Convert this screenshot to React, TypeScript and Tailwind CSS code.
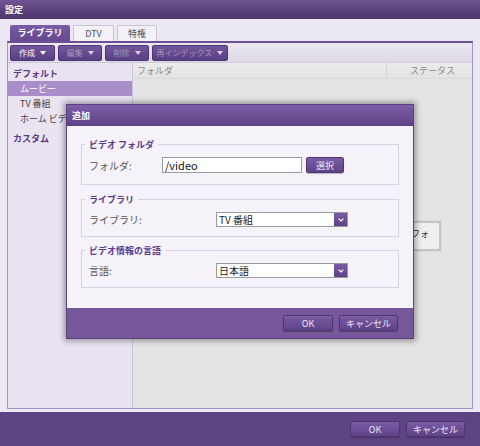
import type { ReactNode } from "react";

const font = "font-['Noto_Sans_CJK_JP','Noto_Sans',sans-serif]";

function Caret({ dim }: { dim?: boolean }) {
  return (
    <svg width="6" height="4" viewBox="0 0 6 4" aria-hidden="true">
      <path d="M0 0H6L3 4Z" fill={dim ? "#d8d0e4" : "#ffffff"} />
    </svg>
  );
}

function ToolButton({
  label,
  width,
  dim,
}: {
  label: string;
  width: string;
  dim?: boolean;
}) {
  return (
    <div
      className={`${width} h-[16px] flex items-center justify-center gap-[5px] whitespace-nowrap rounded-[2px] border border-[#4d3672] bg-gradient-to-b from-[#73569c] to-[#5a3f84] text-[8px] leading-none ${
        dim ? "text-[#a596bd]" : "text-white"
      }`}
    >
      <span>{label}</span>
      <Caret dim={dim} />
    </div>
  );
}

function PurpleButton({ label, width }: { label: string; width: string }) {
  return (
    <div
      className={`${width} h-[16px] flex items-center justify-center whitespace-nowrap rounded-[2px] border border-[#4f3675] bg-gradient-to-b from-[#7a5ba4] to-[#5f4388] text-[9px] leading-none text-[#ece6f4] shadow-[0_1px_1px_rgba(0,0,0,0.25)]`}
    >
      {label}
    </div>
  );
}

function Group({
  legend,
  height,
  children,
}: {
  legend: string;
  height: string;
  children: ReactNode;
}) {
  return (
    <div className={`relative mx-[14px] ${height} border border-[#d6d3de]`}>
      <span className="absolute -top-[7px] left-[3px] bg-[#f5f3f9] px-[4px] text-[9px] leading-[13px] font-bold text-[#5b3c8c]">
        {legend}
      </span>
      {children}
    </div>
  );
}

function Select({ value }: { value: string }) {
  return (
    <div className="flex h-[15px] w-[132px] border border-[#9b9b9b] bg-white">
      <span className="flex-1 pl-[2px] text-[10px] leading-[13px] text-[#1a1a1a]">
        {value}
      </span>
      <div className="flex w-[13px] items-center justify-center bg-gradient-to-b from-[#7a5aa4] to-[#5d4287]">
        <svg width="6" height="4" viewBox="0 0 6 4" aria-hidden="true">
          <path
            d="M0.6 0.6L3 3L5.4 0.6"
            stroke="#ffffff"
            strokeWidth="1.1"
            fill="none"
          />
        </svg>
      </div>
    </div>
  );
}

export default function App() {
  return (
    <div
      className={`relative flex h-[446px] w-[480px] flex-col overflow-hidden bg-[#ece8f3] ${font}`}
    >
      {/* window title */}
      <div className="flex h-[19px] items-center bg-gradient-to-b from-[#6f5693] to-[#4b3569] pl-[5px] text-[9px] font-bold text-white">
        設定
      </div>

      <div className="flex h-[390px] flex-col px-[7px] pt-[6px]">
        {/* tabs */}
        <div className="ml-[3px] flex h-[16px] gap-[3px]">
          <div className="flex w-[60px] items-center justify-center rounded-t-[2px] bg-gradient-to-b from-[#7a5ba5] to-[#65488f] text-[9px] font-bold text-white">
            ライブラリ
          </div>
          <div className="flex w-[41px] items-center justify-center rounded-t-[2px] border border-b-0 border-[#c9c3d4] bg-[#f3f1f6] text-[9px] text-[#555]">
            DTV
          </div>
          <div className="flex w-[40px] items-center justify-center rounded-t-[2px] border border-b-0 border-[#c9c3d4] bg-[#f3f1f6] text-[9px] text-[#555]">
            特権
          </div>
        </div>

        {/* tab panel */}
        <div className="flex flex-1 flex-col border border-t-2 border-[#a690c6] border-t-[#6c4f96]">
          <div className="flex h-[20px] items-center gap-[3px] border-b border-[#d2cbdc] bg-gradient-to-b from-[#ebe8f0] to-[#ddd8e5] pl-[2px]">
            <ToolButton label="作成" width="w-[45px]" />
            <ToolButton label="編集" width="w-[44px]" dim />
            <ToolButton label="削除" width="w-[44px]" dim />
            <ToolButton label="再インデックス" width="w-[76px]" dim />
          </div>

          <div className="flex flex-1">
            {/* sidebar */}
            <div className="flex w-[125px] flex-col border-r border-[#cdc4db] bg-[#e9e3f2] pt-[4px] text-[9px]">
              <div className="flex h-[14px] items-center pl-[5px] font-bold text-[#5a3c88]">
                デフォルト
              </div>
              <div className="flex h-[15px] items-center bg-[#a98dc9] pl-[12px] text-white">
                ムービー
              </div>
              <div className="flex h-[15px] items-center pl-[12px] text-[#444]">
                TV 番組
              </div>
              <div className="flex h-[15px] items-center pl-[12px] text-[#444]">
                ホーム ビデオ
              </div>
              <div className="mt-[5px] flex h-[15px] items-center pl-[5px] font-bold text-[#5a3c88]">
                カスタム
              </div>
            </div>

            {/* list */}
            <div className="flex flex-1 flex-col bg-[#e4e4e4]">
              <div className="flex h-[16px] items-center border-b border-[#d9d9d9] bg-gradient-to-b from-[#ebebeb] to-[#e3e3e3] text-[9px] text-[#8a8a8a]">
                <div className="flex h-full w-[254px] items-center border-r border-[#d4d4d4] pl-[4px]">
                  フォルダ
                </div>
                <div className="flex flex-1 items-center justify-center pl-[6px]">
                  ステータス
                </div>
              </div>
              <div className="flex justify-end pr-[31px] pt-[142px]">
                <div className="flex h-[30px] w-[160px] items-start justify-end border-2 border-[#c4c4c4] bg-[#efefef] pr-[10px] pt-[4px] text-[9px] text-[#333] outline outline-1 outline-[#dcdcdc]">
                  フォ
                </div>
              </div>
            </div>
          </div>
        </div>
      </div>

      {/* bottom bar */}
      <div className="mt-[3px] flex h-[34px] items-center justify-end gap-[6px] bg-[#5d4483] pr-[15px]">
        <PurpleButton label="OK" width="w-[50px]" />
        <PurpleButton label="キャンセル" width="w-[59px]" />
      </div>

      {/* add dialog */}
      <div className="absolute left-[66px] top-[104px] flex h-[235px] w-[348px] flex-col border border-[#5a4280] bg-[#f5f3f9] shadow-[0_0_6px_2px_rgba(0,0,0,0.35)]">
        <div className="flex h-[21px] items-center bg-gradient-to-b from-[#7e5ea7] to-[#5e4285] pl-[5px] text-[9px] font-bold text-white">
          追加
        </div>
        <div className="flex flex-1 flex-col pt-[18px]">
          <Group legend="ビデオ フォルダ" height="h-[41px]">
            <div className="flex items-center pt-[12px] pl-[7px]">
              <span className="w-[73px] text-[10px] text-[#555]">フォルダ:</span>
              <div className="flex h-[16px] w-[140px] items-center border border-[#9b9b9b] bg-white pl-[2px] text-[11px] text-[#111]">
                /video
              </div>
              <div className="ml-[4px]">
                <PurpleButton label="選択" width="w-[38px]" />
              </div>
            </div>
          </Group>
          <div className="h-[14px]" />
          <Group legend="ライブラリ" height="h-[38px]">
            <div className="flex items-center pt-[12px] pl-[7px]">
              <span className="w-[127px] text-[10px] text-[#555]">ライブラリ:</span>
              <Select value="TV 番組" />
            </div>
          </Group>
          <div className="h-[13px]" />
          <Group legend="ビデオ情報の言語" height="h-[38px]">
            <div className="flex items-center pt-[12px] pl-[7px]">
              <span className="w-[127px] text-[10px] text-[#555]">言語:</span>
              <Select value="日本語" />
            </div>
          </Group>
        </div>
        <div className="flex h-[30px] items-start justify-end gap-[6px] bg-[#77569c] pr-[15px] pt-[7px]">
          <PurpleButton label="OK" width="w-[50px]" />
          <PurpleButton label="キャンセル" width="w-[59px]" />
        </div>
      </div>
    </div>
  );
}
